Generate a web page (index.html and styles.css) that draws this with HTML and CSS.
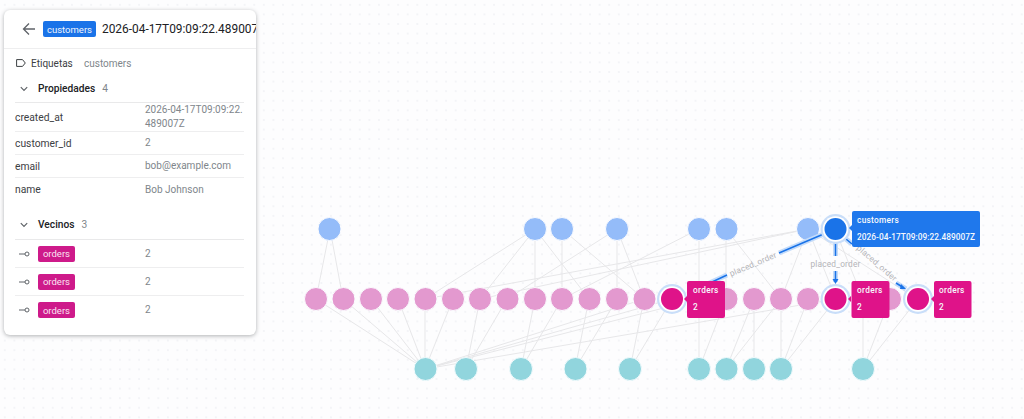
FILE: index.html
```html
<!DOCTYPE html>
<html lang="es">
<head>
<meta charset="utf-8">
<title>Grafo</title>
<link rel="stylesheet" href="styles.css">
</head>
<body>
<main class="canvas">
<svg class="graph" width="1024" height="419" viewBox="0 0 1024 419">
  <g class="edges">
    <path d="M330 229L316 299M330 229L343 299"/>
    <path d="M535 229L425 299M535 229L480 299M535 229L535 299M535 229L589 299"/>
    <path d="M562 229L562 299M562 229L644 299"/>
    <path d="M617 229L617 299M617 229L644 299M617 229L507 299"/>
    <path d="M699 229L699 299M699 229L562 299M726 229L726 299M726 229L781 299M808 229L781 299M808 229L836 299M835 229L863 299M808 229L917 299M808 229L425 299M808 229L480 299"/>
    <path d="M316 299L425 369M343 299L425 369M371 299L425 369M398 299L425 369M425 299L425 369M453 299L425 369"/>
    <path d="M480 299L466 369M507 299L466 369M535 299L521 369M562 299L521 369M589 299L575 369M617 299L575 369M644 299L425 369M672 299L425 369M699 299L425 369"/>
    <path d="M644 299L630 369M672 299L630 369M699 299L699 369M726 299L699 369M754 299L726 369M781 299L726 369M754 299L754 369M781 299L781 369M808 299L781 369M836 299L781 369M836 299L425 369M863 299L863 369M890 299L863 369M918 299L863 369"/>
  </g>
  <g class="nodes-blue">
    <circle cx="329.5" cy="229" r="11.5"/><circle cx="535" cy="229" r="11.5"/><circle cx="562" cy="229" r="11.5"/><circle cx="617" cy="229" r="11.5"/><circle cx="699" cy="229" r="11.5"/><circle cx="726.5" cy="229" r="11.5"/><circle cx="808" cy="229" r="11.5"/>
  </g>
  <g class="nodes-pink">
    <circle cx="316" cy="299" r="11.5"/><circle cx="343.5" cy="299" r="11.5"/><circle cx="371" cy="299" r="11.5"/><circle cx="398" cy="299" r="11.5"/><circle cx="425.5" cy="299" r="11.5"/><circle cx="453" cy="299" r="11.5"/><circle cx="480" cy="299" r="11.5"/><circle cx="507.5" cy="299" r="11.5"/><circle cx="535" cy="299" r="11.5"/><circle cx="562" cy="299" r="11.5"/><circle cx="589.5" cy="299" r="11.5"/><circle cx="617" cy="299" r="11.5"/><circle cx="644.5" cy="299" r="11.5"/><circle cx="699" cy="299" r="11.5"/><circle cx="726.5" cy="299" r="11.5"/><circle cx="754" cy="299" r="11.5"/><circle cx="781" cy="299" r="11.5"/><circle cx="808" cy="299" r="11.5"/><circle cx="863" cy="299" r="11.5"/><circle cx="890" cy="299" r="11.5"/>
  </g>
  <g class="nodes-teal">
    <circle cx="425.5" cy="369" r="11.5"/><circle cx="466" cy="369" r="11.5"/><circle cx="521" cy="369" r="11.5"/><circle cx="575.5" cy="369" r="11.5"/><circle cx="630" cy="369" r="11.5"/><circle cx="699" cy="369" r="11.5"/><circle cx="726.5" cy="369" r="11.5"/><circle cx="754" cy="369" r="11.5"/><circle cx="781" cy="369" r="11.5"/><circle cx="863" cy="369" r="11.5"/>
  </g>
  <g class="hi-wide">
    <path d="M826 233L779 253M727 275L705 285"/>
    <path d="M835.5 240V256M835.5 271V282"/>
    <path d="M846 239L852 244M896 283L906 289"/>
  </g>
  <g class="hi-line">
    <path d="M826 233L779 253M727 275L712 282"/>
    <path d="M835.5 240V256M835.5 271V281"/>
    <path d="M846 239L852 244M896 283L904 288"/>
  </g>
  <path class="arrow-head" d="M832.5 279H838.5L835.5 284Z"/>
  <path class="arrow-head" d="M901 284L906 289L900 289Z"/>
  <g class="halo">
    <circle cx="835.5" cy="229" r="15"/><circle cx="672" cy="299" r="15"/><circle cx="835.5" cy="299" r="15"/><circle cx="918" cy="299" r="15"/>
  </g>
  <g class="ring"><circle cx="835.5" cy="229" r="12.800"/><circle cx="672" cy="299" r="12.800"/><circle cx="835.5" cy="299" r="12.800"/><circle cx="918" cy="299" r="12.800"/></g>
  <circle class="node-selected" cx="835.5" cy="229" r="11"/>
  <g class="node-magenta"><circle cx="672" cy="299" r="11"/><circle cx="835.5" cy="299" r="11"/><circle cx="918" cy="299" r="11"/></g>

  <g class="edge-label">
    <text x="753" y="267" transform="rotate(-23 753 264)">placed_order</text>
    <text x="835.5" y="266.500">placed_order</text>
    <text x="877" y="266" transform="rotate(41 877 263)">placed_order</text>
  </g>

  <path class="tip-blue" d="M852 225l-3 3 3 3z"/>
  <rect class="tip-blue" x="852" y="211" width="128" height="36" rx="2"/>
  <g class="tip-text">
    <text x="857" y="223">customers</text>
    <text class="tip-long" x="857" y="240">2026-04-17T09:09:22.489007Z</text>
  </g>

  <g class="tip-mag">
    <path d="M687 296l-3 3 3 3z"/><rect x="687" y="281" width="38" height="37" rx="2"/>
    <path d="M851 296l-3 3 3 3z"/><rect x="851.500" y="281" width="38" height="37" rx="2"/>
    <path d="M934 296l-3 3 3 3z"/><rect x="934" y="281" width="37.500" height="37" rx="2"/>
  </g>
  <g class="tip-text">
    <text x="693" y="293">orders</text><text x="693" y="310">2</text>
    <text x="857" y="293">orders</text><text x="857" y="310">2</text>
    <text x="939" y="293">orders</text><text x="939" y="310">2</text>
  </g>
</svg>

<aside class="panel">
  <header class="panel-head">
    <svg class="back" width="14" height="14" viewBox="0 0 14 14"><path d="M13 7H2M7 1.500L1.500 7L7 12.500"/></svg>
    <span class="badge badge-blue">customers</span>
    <span class="title">2026-04-17T09:09:22.489007Z</span>
  </header>
  <div class="panel-body">
    <div class="labels">
      <svg class="tag" width="10" height="8" viewBox="0 0 10 8"><path d="M.6.6H6.500L9.300 4L6.500 7.400H.6Z"/></svg>
      <span class="key-label">Etiquetas</span>
      <span class="muted">customers</span>
    </div>
    <div class="section-head sec-props">
      <svg class="chev" width="8" height="6" viewBox="0 0 8 6"><path d="M.8 1.200L4 4.400L7.200 1.200"/></svg>
      <span class="section-name">Propiedades</span><span class="count">4</span>
    </div>
    <div class="row row-tall"><span class="key">created_at</span><span class="val">2026-04-17T09:09:22.<br>489007Z</span></div>
    <div class="row"><span class="key">customer_id</span><span class="val">2</span></div>
    <div class="row"><span class="key">email</span><span class="val">bob@example.com</span></div>
    <div class="row row-last"><span class="key">name</span><span class="val">Bob Johnson</span></div>
    <div class="section-head sec-neigh">
      <svg class="chev" width="8" height="6" viewBox="0 0 8 6"><path d="M.8 1.200L4 4.400L7.200 1.200"/></svg>
      <span class="section-name">Vecinos</span><span class="count">3</span>
    </div>
    <div class="row nrow"><span class="key nkey"><svg class="link" width="11" height="6" viewBox="0 0 11 6"><path d="M0 3H6"/><circle cx="8" cy="3" r="2"/></svg><span class="badge badge-mag">orders</span></span><span class="val">2</span></div>
    <div class="row nrow"><span class="key nkey"><svg class="link" width="11" height="6" viewBox="0 0 11 6"><path d="M0 3H6"/><circle cx="8" cy="3" r="2"/></svg><span class="badge badge-mag">orders</span></span><span class="val">2</span></div>
    <div class="row nrow"><span class="key nkey"><svg class="link" width="11" height="6" viewBox="0 0 11 6"><path d="M0 3H6"/><circle cx="8" cy="3" r="2"/></svg><span class="badge badge-mag">orders</span></span><span class="val">2</span></div>
  </div>
</aside>
</main>
</body>
</html>
```

FILE: styles.css
```css
* { box-sizing: border-box; }
html, body { margin: 0; height: 100%; overflow: hidden; }
body {
  font-family: Roboto, "Liberation Sans", sans-serif;
  background: #fdfdfe;
}
.canvas {
  width: 1024px;
  height: 419px;
  padding: 10px 0 0 4px;
  position: relative;
  background-color: #fdfdfe;
  background-image: radial-gradient(circle, #eff0f4 0.6px, transparent 0.9px);
  background-size: 9.6px 9.6px;
}
.graph { position: absolute; left: 0; top: 0; }
.edges path { fill: none; stroke: #e7e7e9; stroke-width: 1; }
.halo circle { fill: #c9def9; }
.hi-wide path { fill: none; stroke: #c3dbfa; stroke-width: 5; }
.hi-line path { fill: none; stroke: #1a73e8; stroke-width: 1.5; }
.arrow-head { fill: #1a73e8; }
.nodes-blue circle { fill: #94bcf9; stroke: #fbfcff; stroke-width: 1; }
.nodes-pink circle { fill: #e399cf; stroke: #fbfcff; stroke-width: 1; }
.nodes-teal circle { fill: #91d5dd; stroke: #f2fbfd; stroke-width: 1; }
.ring circle { fill: #fff; }
.node-selected { fill: #1a73e8; }
.node-magenta circle { fill: #df1389; }
.edge-label text {
  font-size: 8.300px;
  fill: #b4b4b8;
  text-anchor: middle;
  letter-spacing: 0.2px;
}
.tip-blue { fill: #1f78ec; }
.tip-mag { fill: #df1389; }
.tip-text text {
  font-size: 8.300px;
  font-weight: 500;
  fill: #f6f8fc;
  letter-spacing: 0.3px;
}
.tip-text .tip-long { letter-spacing: 0.05px; }

.panel {
  position: relative;
  width: 252px;
  height: 325px;
  background: #fff;
  border-radius: 6px;
  overflow: hidden;
  box-shadow: 0 1px 4px rgba(60, 64, 67, 0.4);
}
.panel-head {
  height: 39px;
  display: flex;
  align-items: center;
  padding: 0 0 0 18px;
  border-bottom: 1px solid #eeeeef;
  white-space: nowrap;
}
.back { flex: none; margin-right: 7px; }
.back path { fill: none; stroke: #5f6368; stroke-width: 1.3; }
.badge {
  flex: none;
  display: inline-flex;
  align-items: center;
  justify-content: center;
  color: #f1f5fd;
  font-size: 9.500px;
  border-radius: 2px;
}
.badge-blue { width: 53px; height: 16px; background: #1a73e8; }
.badge-mag { width: 37px; height: 16px; background: #ce1a8a; color: #fbe3f2; }
.title { margin-left: 6px; font-size: 11.900px; color: #202124; }
.panel-body { padding: 0 12px 0 11px; }
.labels {
  height: 26px;
  display: flex;
  align-items: center;
  font-size: 10px;
  padding-top: 2px;
}
.tag { margin-left: 1px; margin-right: 5px; }
.tag path { fill: none; stroke: #3c4043; stroke-width: 1; }
.key-label { color: #3c4043; width: 53px; }
.muted { color: #80868b; }
.section-head {
  display: flex;
  align-items: center;
  font-size: 10.200px;
  padding-left: 5px;
}
.sec-props { height: 28px; border-bottom: 1px solid #e9e9ea; }
.sec-neigh { height: 39px; padding-top: 9px; border-bottom: 1px solid #e9e9ea; }
.chev { margin-right: 10px; }
.chev path { fill: none; stroke: #5f6368; stroke-width: 1.2; }
.section-name { color: #202124; font-weight: 500; }
.count { margin-left: 7px; color: #80868b; }
.row {
  height: 23px;
  display: flex;
  align-items: center;
  font-size: 10.300px;
  border-bottom: 1px solid #eeeeef;
  white-space: nowrap;
}
.row-last { border-bottom: 0; }
.row-tall { height: 29px; }
.nrow { height: 28px; }
.nrow:last-child { border-bottom: 0; }
.key { width: 130px; color: #3c4043; flex: none; }
.val { color: #80868b; line-height: 14px; font-size: 10px; }
.nkey { display: flex; align-items: center; padding-left: 4px; }
.link { margin-right: 8px; }
.link path, .link circle { fill: none; stroke: #5f6368; stroke-width: 1; }
```
